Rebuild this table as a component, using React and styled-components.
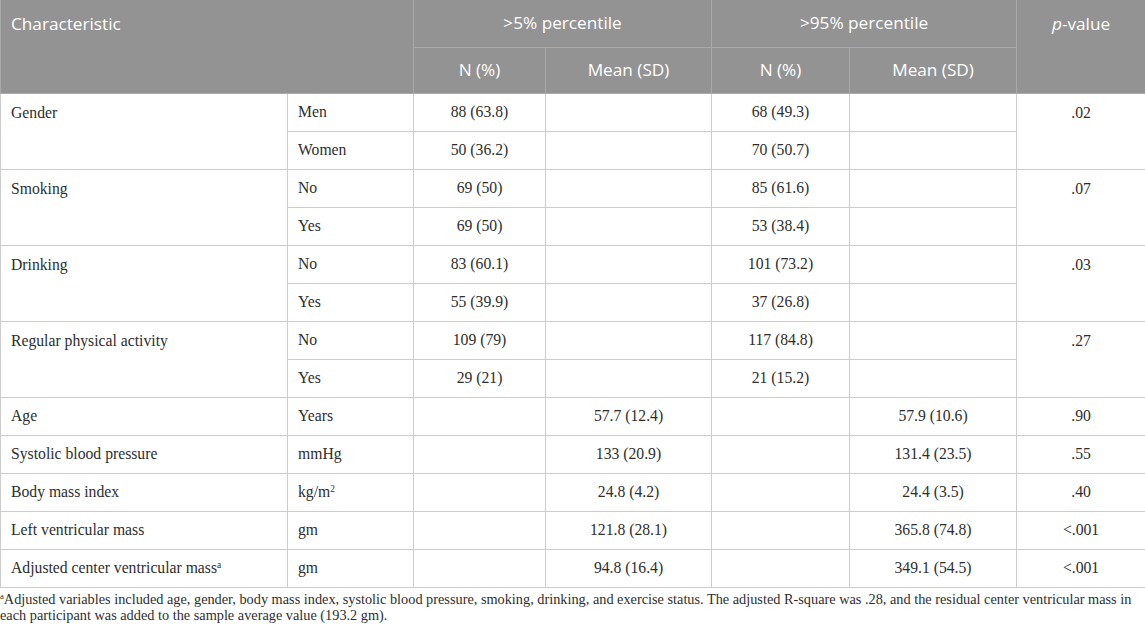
import React from "react";
import styled, { createGlobalStyle } from "styled-components";

const GlobalStyle = createGlobalStyle`
  html, body {
    margin: 0;
    padding: 0;
    background: #ffffff;
  }
`;

const Page = styled.div`
  width: 1145px;
  font-family: "Liberation Serif", "DejaVu Serif", serif;
  color: #2e2e2e;
`;

const Table = styled.table`
  width: 1145px;
  border-collapse: collapse;
  table-layout: fixed;
`;

const HeadCell = styled.th`
  background: #939393;
  color: #ffffff;
  font-family: "Open Sans", "Liberation Sans", sans-serif;
  font-weight: 400;
  font-size: 17.2px;
  line-height: 22px;
  height: ${(p) => p.$h || 46}px;
  padding: ${(p) => (p.$top ? "13px 10px 0" : "0 10px")};
  text-align: ${(p) => p.$align || "center"};
  vertical-align: ${(p) => (p.$top ? "top" : "middle")};
  border: 1px solid #a9a9a9;
  border-top: none;
  box-sizing: border-box;
`;

const Cell = styled.td`
  font-size: 15.7px;
  line-height: 18px;
  height: 38px;
  padding: ${(p) => (p.$top ? "10px 10px 0" : "0 10px")};
  text-align: ${(p) => p.$align || "left"};
  vertical-align: ${(p) => (p.$top ? "top" : "middle")};
  border: 1px solid #cccccc;
  box-sizing: border-box;
  white-space: nowrap;
`;

const Sup = styled.sup`
  font-size: 0.6em;
  line-height: 0;
  vertical-align: 0.55em;
`;

const Italic = styled.i`
  font-style: italic;
`;

const Note = styled.p`
  margin: 0;
  padding-top: 3px;
  font-size: 14.3px;
  line-height: 16.5px;
  white-space: nowrap;
`;

const grouped = [
  { name: "Gender", p: ".02", rows: [["Men", "88 (63.8)", "68 (49.3)"], ["Women", "50 (36.2)", "70 (50.7)"]] },
  { name: "Smoking", p: ".07", rows: [["No", "69 (50)", "85 (61.6)"], ["Yes", "69 (50)", "53 (38.4)"]] },
  { name: "Drinking", p: ".03", rows: [["No", "83 (60.1)", "101 (73.2)"], ["Yes", "55 (39.9)", "37 (26.8)"]] },
  { name: "Regular physical activity", p: ".27", rows: [["No", "109 (79)", "117 (84.8)"], ["Yes", "29 (21)", "21 (15.2)"]] },
];

const single = [
  { name: "Age", unit: "Years", a: "57.7 (12.4)", b: "57.9 (10.6)", p: ".90" },
  { name: "Systolic blood pressure", unit: "mmHg", a: "133 (20.9)", b: "131.4 (23.5)", p: ".55" },
  { name: "Body mass index", unit: <>kg/m<Sup>2</Sup></>, a: "24.8 (4.2)", b: "24.4 (3.5)", p: ".40" },
  { name: "Left ventricular mass", unit: "gm", a: "121.8 (28.1)", b: "365.8 (74.8)", p: "<.001" },
  { name: <>Adjusted center ventricular mass<Sup>a</Sup></>, unit: "gm", a: "94.8 (16.4)", b: "349.1 (54.5)", p: "<.001" },
];

export default function App() {
  return (
    <Page>
      <GlobalStyle />
      <Table>
        <colgroup>
          <col style={{ width: 287 }} />
          <col style={{ width: 126 }} />
          <col style={{ width: 132 }} />
          <col style={{ width: 166 }} />
          <col style={{ width: 138 }} />
          <col style={{ width: 167 }} />
          <col style={{ width: 129 }} />
        </colgroup>
        <thead>
          <tr>
            <HeadCell colSpan={2} rowSpan={2} $top $align="left">Characteristic</HeadCell>
            <HeadCell colSpan={2} $h={47}>&gt;5% percentile</HeadCell>
            <HeadCell colSpan={2} $h={47}>&gt;95% percentile</HeadCell>
            <HeadCell rowSpan={2} $top><Italic>p</Italic>-value</HeadCell>
          </tr>
          <tr>
            <HeadCell>N (%)</HeadCell>
            <HeadCell>Mean (SD)</HeadCell>
            <HeadCell>N (%)</HeadCell>
            <HeadCell>Mean (SD)</HeadCell>
          </tr>
        </thead>
        <tbody>
          {grouped.map((g) =>
            g.rows.map((r, i) => (
              <tr key={g.name + r[0]}>
                {i === 0 && <Cell rowSpan={2} $top>{g.name}</Cell>}
                <Cell>{r[0]}</Cell>
                <Cell $align="center">{r[1]}</Cell>
                <Cell />
                <Cell $align="center">{r[2]}</Cell>
                <Cell />
                {i === 0 && <Cell rowSpan={2} $top $align="center">{g.p}</Cell>}
              </tr>
            ))
          )}
          {single.map((s, i) => (
            <tr key={i}>
              <Cell>{s.name}</Cell>
              <Cell>{s.unit}</Cell>
              <Cell />
              <Cell $align="center">{s.a}</Cell>
              <Cell />
              <Cell $align="center">{s.b}</Cell>
              <Cell $align="center">{s.p}</Cell>
            </tr>
          ))}
        </tbody>
      </Table>
      <Note>
        <Sup>a</Sup>Adjusted variables included age, gender, body mass index, systolic blood pressure, smoking, drinking, and exercise status. The adjusted R-square was .28, and the residual center ventricular mass in
        <br />
        each participant was added to the sample average value (193.2 gm).
      </Note>
    </Page>
  );
}
